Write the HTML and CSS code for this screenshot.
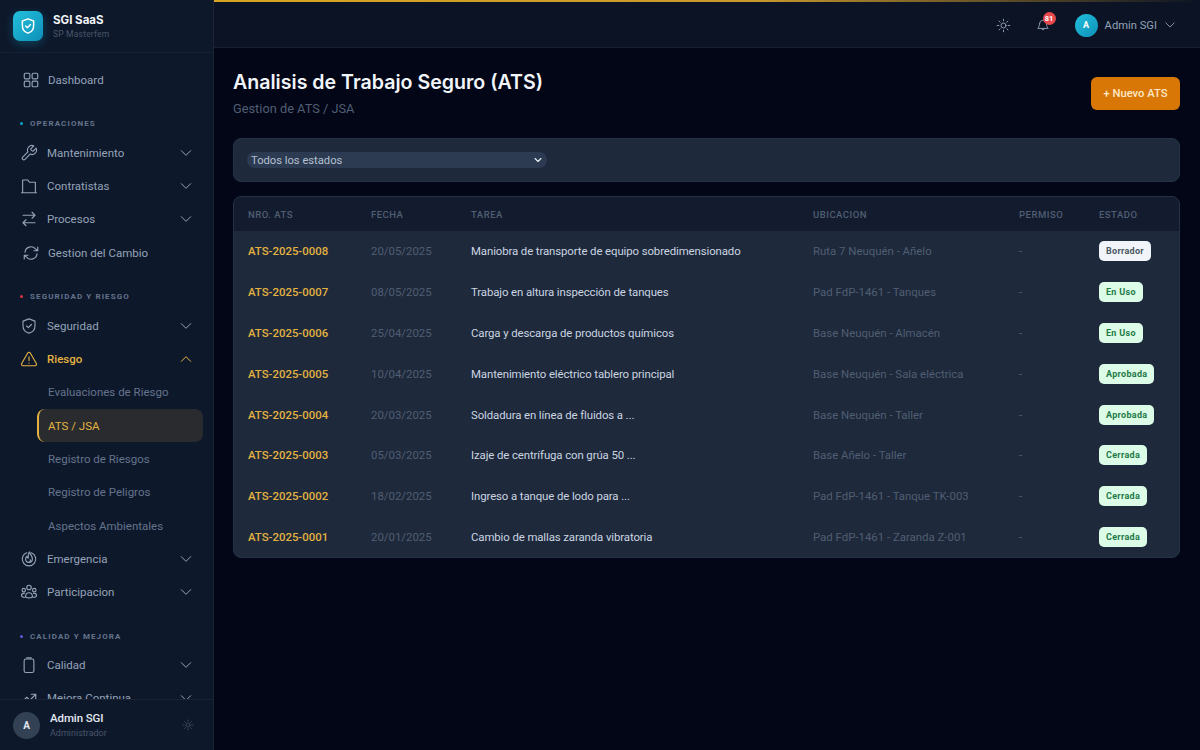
FILE: index.html
```html
<!DOCTYPE html>
<html lang="es">

<head>
    <meta charset="UTF-8">
    <title>Analisis de Trabajo Seguro (ATS)</title>
    <link rel="stylesheet" href="styles.css">
</head>

<body>
    <aside class="sidebar">
        <div class="brand">
            <div class="brand-logo">
                <svg viewBox="0 0 24 24"><path d="M12 2.500 4.500 5.300v6.200c0 4.600 3.100 8.400 7.500 10 4.400-1.600 7.500-5.400 7.500-10V5.300z"/><path d="m8.800 12 2.300 2.300 4.200-4.300"/></svg>
            </div>
            <div>
                <div class="brand-name">SGI SaaS</div>
                <div class="brand-sub">SP Masterfem</div>
            </div>
        </div>

        <nav class="nav">
            <a class="nav-item nav-single">
                <svg class="ico" viewBox="0 0 24 24"><rect x="3" y="3" width="7.500" height="7.500" rx="1.500"/><rect x="13.500" y="3" width="7.500" height="7.500" rx="1.500"/><rect x="3" y="13.500" width="7.500" height="7.500" rx="1.500"/><rect x="13.500" y="13.500" width="7.500" height="7.500" rx="1.500"/></svg>
                <span>Dashboard</span>
            </a>

            <div class="nav-section"><i class="dot dot-blue"></i>OPERACIONES</div>
            <a class="nav-item">
                <svg class="ico" viewBox="0 0 24 24"><path d="M14.700 6.300a1 1 0 0 0 0 1.400l1.600 1.600a1 1 0 0 0 1.400 0l3.770-3.770a6 6 0 0 1-7.940 7.940l-6.910 6.910a2.120 2.120 0 0 1-3-3l6.910-6.910a6 6 0 0 1 7.940-7.940z"/></svg>
                <span>Mantenimiento</span>
                <svg class="chev" viewBox="0 0 24 24"><path d="m5 8.500 7 7 7-7"/></svg>
            </a>
            <a class="nav-item">
                <svg class="ico" viewBox="0 0 24 24"><path d="M2 21h20M3.500 21V4h7l2 3h8v14"/></svg>
                <span>Contratistas</span>
                <svg class="chev" viewBox="0 0 24 24"><path d="m5 8.500 7 7 7-7"/></svg>
            </a>
            <a class="nav-item">
                <svg class="ico" viewBox="0 0 24 24"><path d="m16 3 4 4-4 4M20 7H4M8 21l-4-4 4-4M4 17h16"/></svg>
                <span>Procesos</span>
                <svg class="chev" viewBox="0 0 24 24"><path d="m5 8.500 7 7 7-7"/></svg>
            </a>
            <a class="nav-item nav-single">
                <svg class="ico" viewBox="0 0 24 24"><path d="M4 11a8 8 0 0 1 14-4.500L21 9M21 4v5h-5M20 13a8 8 0 0 1-14 4.500L3 15M3 20v-5h5"/></svg>
                <span>Gestion del Cambio</span>
            </a>

            <div class="nav-section"><i class="dot dot-red"></i>SEGURIDAD Y RIESGO</div>
            <a class="nav-item">
                <svg class="ico" viewBox="0 0 24 24"><path d="M12 2.500 4 5.500v6c0 4.800 3.300 8.600 8 10 4.700-1.400 8-5.200 8-10v-6z"/><path d="m8.800 12 2.300 2.300 4.200-4.300"/></svg>
                <span>Seguridad</span>
                <svg class="chev" viewBox="0 0 24 24"><path d="m5 8.500 7 7 7-7"/></svg>
            </a>
            <a class="nav-item nav-open">
                <svg class="ico" viewBox="0 0 24 24"><path d="M10.300 3.900 2.200 18a2 2 0 0 0 1.700 3h16.200a2 2 0 0 0 1.700-3L13.700 3.900a2 2 0 0 0-3.400 0z"/><path d="M12 9v5M12 17.300v.2"/></svg>
                <span>Riesgo</span>
                <svg class="chev" viewBox="0 0 24 24"><path d="m5 15.500 7-7 7 7"/></svg>
            </a>
            <a class="nav-sub">Evaluaciones de Riesgo</a>
            <a class="nav-sub nav-sub-active">ATS / JSA</a>
            <a class="nav-sub">Registro de Riesgos</a>
            <a class="nav-sub">Registro de Peligros</a>
            <a class="nav-sub">Aspectos Ambientales</a>
            <a class="nav-item">
                <svg class="ico" viewBox="0 0 24 24"><path d="M9 3.600a9 9 0 1 0 6 0"/><path d="M12.500 2.500c.5 3 4 4.800 4 9.500a4.500 4.500 0 0 1-9 0c0-1.500.6-2.700 1.500-3.500.3 1.300 1 2 2 2.300-.5-2.800.2-5.800 1.500-8.300z"/><path d="M12 16a2 2 0 0 0 1.700-3"/></svg>
                <span>Emergencia</span>
                <svg class="chev" viewBox="0 0 24 24"><path d="m5 8.500 7 7 7-7"/></svg>
            </a>
            <a class="nav-item">
                <svg class="ico" viewBox="0 0 24 24"><circle cx="12" cy="6" r="3"/><circle cx="5" cy="9.500" r="2.300"/><circle cx="19" cy="9.500" r="2.300"/><path d="M6.500 19C3.500 19 2 18 2 16.500s1.500-3 4-3M17.500 19c3 0 4.500-1 4.500-2.500s-1.500-3-4-3M7.500 18c0-3 2-5 4.500-5s4.500 2 4.500 5c0 2.500-9 2.500-9 0z"/></svg>
                <span>Participacion</span>
                <svg class="chev" viewBox="0 0 24 24"><path d="m5 8.500 7 7 7-7"/></svg>
            </a>

            <div class="nav-section"><i class="dot dot-violet"></i>CALIDAD Y MEJORA</div>
            <a class="nav-item">
                <svg class="ico" viewBox="0 0 24 24"><rect x="5.500" y="4" width="13" height="18" rx="2.500"/><path d="M9 2.500h6"/></svg>
                <span>Calidad</span>
                <svg class="chev" viewBox="0 0 24 24"><path d="m5 8.500 7 7 7-7"/></svg>
            </a>
            <a class="nav-item">
                <svg class="ico" viewBox="0 0 24 24"><path d="m2 18 7-7 4 4 8-8M15 7h6v6"/></svg>
                <span>Mejora Continua</span>
                <svg class="chev" viewBox="0 0 24 24"><path d="m5 8.500 7 7 7-7"/></svg>
            </a>
        </nav>

        <div class="side-user">
            <div class="side-avatar">A</div>
            <div class="side-user-text">
                <div class="side-user-name">Admin SGI</div>
                <div class="side-user-role">Administrador</div>
            </div>
            <svg class="sun sun-small" viewBox="0 0 24 24"><circle cx="12" cy="12" r="4"/><path d="M12 2v2.500M12 19.500V22M2 12h2.500M19.500 12H22M4.900 4.900l1.800 1.800M17.300 17.300l1.800 1.800M4.900 19.100l1.800-1.800M17.300 6.700l1.800-1.800"/></svg>
        </div>
    </aside>

    <div class="page">
        <header class="topbar">
            <svg class="sun" viewBox="0 0 24 24"><circle cx="12" cy="12" r="4"/><path d="M12 2v2.500M12 19.500V22M2 12h2.500M19.500 12H22M4.900 4.900l1.800 1.800M17.300 17.300l1.800 1.800M4.900 19.100l1.800-1.800M17.300 6.700l1.800-1.800"/></svg>
            <div class="bell">
                <svg viewBox="0 0 24 24"><path d="M6 9a6 6 0 0 1 12 0c0 5 2 7 3 8H3c1-1 3-3 3-8zM9.500 17.500a2.600 2.600 0 0 0 5 0"/></svg>
                <span class="bell-badge">81</span>
            </div>
            <div class="user-menu">
                <div class="user-avatar">A</div>
                <span>Admin SGI</span>
                <svg viewBox="0 0 24 24"><path d="m5 8.500 7 7 7-7"/></svg>
            </div>
        </header>

        <main class="content">
            <div class="page-head">
                <div>
                    <h1>Analisis de Trabajo Seguro (ATS)</h1>
                    <p>Gestion de ATS / JSA</p>
                </div>
                <button class="btn-new">+ Nuevo ATS</button>
            </div>

            <div class="filter-bar">
                <div class="fake-select">
                    <span>Todos los estados</span>
                    <svg viewBox="0 0 24 24"><path d="m5 8.500 7 7 7-7"/></svg>
                </div>
            </div>

            <div class="table-card">
                <table>
                    <thead>
                        <tr>
                            <th>NRO. ATS</th>
                            <th>FECHA</th>
                            <th>TAREA</th>
                            <th>UBICACION</th>
                            <th>PERMISO</th>
                            <th>ESTADO</th>
                        </tr>
                    </thead>
                    <tbody>
                        <tr><td class="code">ATS-2025-0008</td><td class="muted">20/05/2025</td><td class="task">Maniobra de transporte de equipo sobredimensionado</td><td class="muted">Ruta 7 Neuquén - Añelo</td><td class="muted">-</td><td><span class="badge badge-gray">Borrador</span></td></tr>
                        <tr><td class="code">ATS-2025-0007</td><td class="muted">08/05/2025</td><td class="task">Trabajo en altura inspección de tanques</td><td class="muted">Pad FdP-1461 - Tanques</td><td class="muted">-</td><td><span class="badge badge-green">En Uso</span></td></tr>
                        <tr><td class="code">ATS-2025-0006</td><td class="muted">25/04/2025</td><td class="task">Carga y descarga de productos químicos</td><td class="muted">Base Neuquén - Almacén</td><td class="muted">-</td><td><span class="badge badge-green">En Uso</span></td></tr>
                        <tr><td class="code">ATS-2025-0005</td><td class="muted">10/04/2025</td><td class="task">Mantenimiento eléctrico tablero principal</td><td class="muted">Base Neuquén - Sala eléctrica</td><td class="muted">-</td><td><span class="badge badge-green">Aprobada</span></td></tr>
                        <tr><td class="code">ATS-2025-0004</td><td class="muted">20/03/2025</td><td class="task">Soldadura en línea de fluidos a ...</td><td class="muted">Base Neuquén - Taller</td><td class="muted">-</td><td><span class="badge badge-green">Aprobada</span></td></tr>
                        <tr><td class="code">ATS-2025-0003</td><td class="muted">05/03/2025</td><td class="task">Izaje de centrífuga con grúa 50 ...</td><td class="muted">Base Añelo - Taller</td><td class="muted">-</td><td><span class="badge badge-green">Cerrada</span></td></tr>
                        <tr><td class="code">ATS-2025-0002</td><td class="muted">18/02/2025</td><td class="task">Ingreso a tanque de lodo para ...</td><td class="muted">Pad FdP-1461 - Tanque TK-003</td><td class="muted">-</td><td><span class="badge badge-green">Cerrada</span></td></tr>
                        <tr><td class="code">ATS-2025-0001</td><td class="muted">20/01/2025</td><td class="task">Cambio de mallas zaranda vibratoria</td><td class="muted">Pad FdP-1461 - Zaranda Z-001</td><td class="muted">-</td><td><span class="badge badge-green">Cerrada</span></td></tr>
                    </tbody>
                </table>
            </div>
        </main>
    </div>
</body>

</html>
```

FILE: styles.css
```css
* {
    box-sizing: border-box;
}

html,
body {
    margin: 0;
    padding: 0;
    height: 100%;
    overflow: hidden;
}

body {
    display: flex;
    background: #020617;
    color: #cbd5e1;
    font-family: Roboto, "Liberation Sans", sans-serif;
}

svg {
    fill: none;
    stroke: currentColor;
    stroke-width: 1.5;
    stroke-linecap: round;
    stroke-linejoin: round;
    flex-shrink: 0;
}

/* Sidebar */
.sidebar {
    width: 214px;
    height: 750px;
    flex-shrink: 0;
    display: flex;
    flex-direction: column;
    background: #0e182b;
    border-right: 1px solid #1a2435;
}

.brand {
    height: 53px;
    flex-shrink: 0;
    display: flex;
    align-items: center;
    gap: 10px;
    padding: 0 13px;
    border-bottom: 1px solid #162033;
}

.brand-logo {
    width: 30px;
    height: 30px;
    border-radius: 7px;
    display: flex;
    align-items: center;
    justify-content: center;
    background: linear-gradient(135deg, #22c0dc, #0e8fb8);
    box-shadow: 0 3px 10px rgba(14, 165, 200, 0.3);
    color: #fff;
}

.brand-logo svg {
    width: 18px;
    height: 18px;
    stroke-width: 2;
}

.brand-name {
    font-family: Inter, sans-serif;
    font-size: 11.5px;
    font-weight: 700;
    color: #f1f5f9;
    line-height: 14px;
}

.brand-sub {
    margin-top: 1px;
    font-size: 8.5px;
    color: #475569;
    line-height: 12px;
    letter-spacing: 0.2px;
}

.nav {
    flex: 1;
    overflow: hidden;
    padding: 10px 10px 0;
}

.nav-item,
.nav-sub {
    height: 33.3px;
    display: flex;
    align-items: center;
    font-size: 11.5px;
    color: #94a3b8;
}

.nav-item {
    padding-left: 10px;
    padding-right: 9.5px;
}

.nav-item span {
    flex: 1;
    margin-left: 9px;
}

.nav-single .ico {
    margin-left: 1.5px;
}

.nav-single span {
    margin-left: 8.5px;
}

.ico {
    width: 18px;
    height: 18px;
}

.chev {
    width: 16px;
    height: 16px;
}

.nav-open {
    color: #e3b341;
    font-weight: 500;
}

.nav-sub {
    margin-left: 27px;
    padding-left: 11px;
    width: 166px;
    color: #64748b;
}

.nav-sub-active {
    color: #e3b341;
    background: #292b2f;
    border-left: 2px solid #e3b341;
    border-radius: 8px;
    padding-left: 9px;
}

.nav-section {
    display: flex;
    align-items: center;
    height: 14px;
    margin: 20.3px 0 5.5px;
    padding-left: 10px;
    font-size: 8px;
    font-weight: 700;
    letter-spacing: 1.1px;
    color: #64748b;
}

.dot {
    width: 3px;
    height: 3px;
    border-radius: 50%;
    margin-right: 7px;
}

.dot-blue {
    background: #0ea5c8;
}

.dot-red {
    background: #dc3545;
}

.dot-violet {
    background: #5b5bd6;
}

.side-user {
    height: 51px;
    flex-shrink: 0;
    display: flex;
    align-items: center;
    padding: 0 13px;
    border-top: 1px solid #1a2435;
    background: #0e182b;
}

.side-avatar {
    width: 27px;
    height: 27px;
    border-radius: 50%;
    background: #334155;
    color: #e2e8f0;
    font-size: 10px;
    font-weight: 700;
    display: flex;
    align-items: center;
    justify-content: center;
}

.side-user-text {
    flex: 1;
    margin-left: 10px;
}

.side-user-name {
    margin-top: 1px;
    font-size: 11.5px;
    letter-spacing: -0.1px;
    font-weight: 500;
    color: #e2e8f0;
    line-height: 15px;
}

.side-user-role {
    font-size: 9px;
    color: #475569;
    line-height: 13px;
    margin-top: 1px;
}

.sun {
    width: 15px;
    height: 15px;
    color: #94a3b8;
}

.sun-small {
    width: 12px;
    height: 12px;
    margin-right: 6px;
    color: #475569;
}

/* Header */
.page {
    flex: 1;
    min-width: 0;
    display: flex;
    flex-direction: column;
}

.topbar {
    height: 48px;
    flex-shrink: 0;
    display: flex;
    align-items: center;
    justify-content: flex-end;
    padding-right: 23px;
    background: #0b1324;
    border-top: 2px solid;
    border-image: linear-gradient(90deg, #d9a520, #c8982c 55%, #0b1324) 1;
    border-bottom: 0;
    box-shadow: inset 0 -1px 0 #161f31;
}

.bell {
    position: relative;
    width: 14px;
    height: 15px;
    margin-left: 24.5px;
    color: #94a3b8;
}

.bell svg {
    width: 14px;
    height: 15px;
    display: block;
}

.bell-badge {
    position: absolute;
    top: -6px;
    left: 7px;
    width: 13px;
    height: 13px;
    border-radius: 50%;
    background: #e5484d;
    color: #fff;
    font-size: 7.5px;
    font-weight: 700;
    line-height: 13px;
    text-align: center;
}

.user-menu {
    display: flex;
    align-items: center;
    margin-left: 25px;
    font-size: 11.2px;
    color: #94a3b8;
}

.user-avatar {
    width: 23px;
    height: 23px;
    border-radius: 50%;
    background: linear-gradient(135deg, #22c0dc, #0e8fb8);
    color: #fff;
    font-size: 9px;
    font-weight: 700;
    display: flex;
    align-items: center;
    justify-content: center;
    margin-right: 7px;
}

.user-menu svg {
    width: 14px;
    height: 14px;
    margin-left: 6px;
}

/* Content */
.content {
    padding: 20px 20px 0 19px;
}

.page-head {
    display: flex;
    justify-content: space-between;
    align-items: flex-start;
    height: 70px;
}

h1 {
    margin: 0;
    padding-top: 1px;
    font-family: Inter, sans-serif;
    font-size: 19.6px;
    line-height: 26px;
    font-weight: 600;
    color: #f1f5f9;
}

.page-head p {
    margin: 5px 0 0;
    font-size: 12.8px;
    line-height: 18px;
    color: #505e73;
}

.btn-new {
    width: 89px;
    height: 33px;
    margin-top: 9px;
    border: none;
    border-radius: 6px;
    background: #d97706;
    color: #fde8c8;
    font-family: Roboto, sans-serif;
    font-size: 11.2px;
    font-weight: 500;
}

.filter-bar {
    height: 44px;
    display: flex;
    align-items: center;
    padding: 0 13px;
    background: #1e293b;
    border: 1px solid #253145;
    border-radius: 8px;
}

.fake-select {
    width: 300px;
    height: 16px;
    display: flex;
    align-items: center;
    justify-content: space-between;
    padding: 0 4px;
    border-radius: 8px;
    background: #2c3b52;
    font-size: 11.2px;
    color: #b4c0cf;
}

.fake-select svg {
    width: 10px;
    height: 10px;
    stroke-width: 3;
    color: #e2e8f0;
}

.table-card {
    margin-top: 14px;
    overflow: hidden;
    border: 1px solid #253145;
    border-radius: 8px;
    background: #1e293b;
}

table {
    width: 100%;
    table-layout: fixed;
    border-collapse: collapse;
}

th {
    height: 34px;
    padding: 0 0 0 14px;
    text-align: left;
    font-size: 9.5px;
    font-weight: 500;
    letter-spacing: 0.5px;
    color: #505e73;
    background: #131c2e;
}

th:nth-child(1) {
    width: 123px;
}

th:nth-child(2) {
    width: 100px;
}

th:nth-child(3) {
    width: 342px;
}

th:nth-child(4) {
    width: 206px;
}

th:nth-child(5) {
    width: 80px;
}

td {
    height: 40.8px;
    padding: 0 0 0 14px;
    font-size: 11.4px;
    white-space: nowrap;
}

.code {
    color: #e3b341;
    font-weight: 500;
}

.muted {
    color: #505e73;
}

.task {
    color: #cbd5e1;
    letter-spacing: -0.1px;
}

.badge {
    display: inline-block;
    padding: 0 7px;
    height: 20px;
    line-height: 20px;
    border-radius: 5px;
    font-size: 9px;
    font-weight: 700;
    letter-spacing: 0.3px;
    vertical-align: middle;
}

.badge-gray {
    background: #f1f5f9;
    color: #4b5563;
}

.badge-green {
    background: #dcfce7;
    color: #1f7a47;
}
```
